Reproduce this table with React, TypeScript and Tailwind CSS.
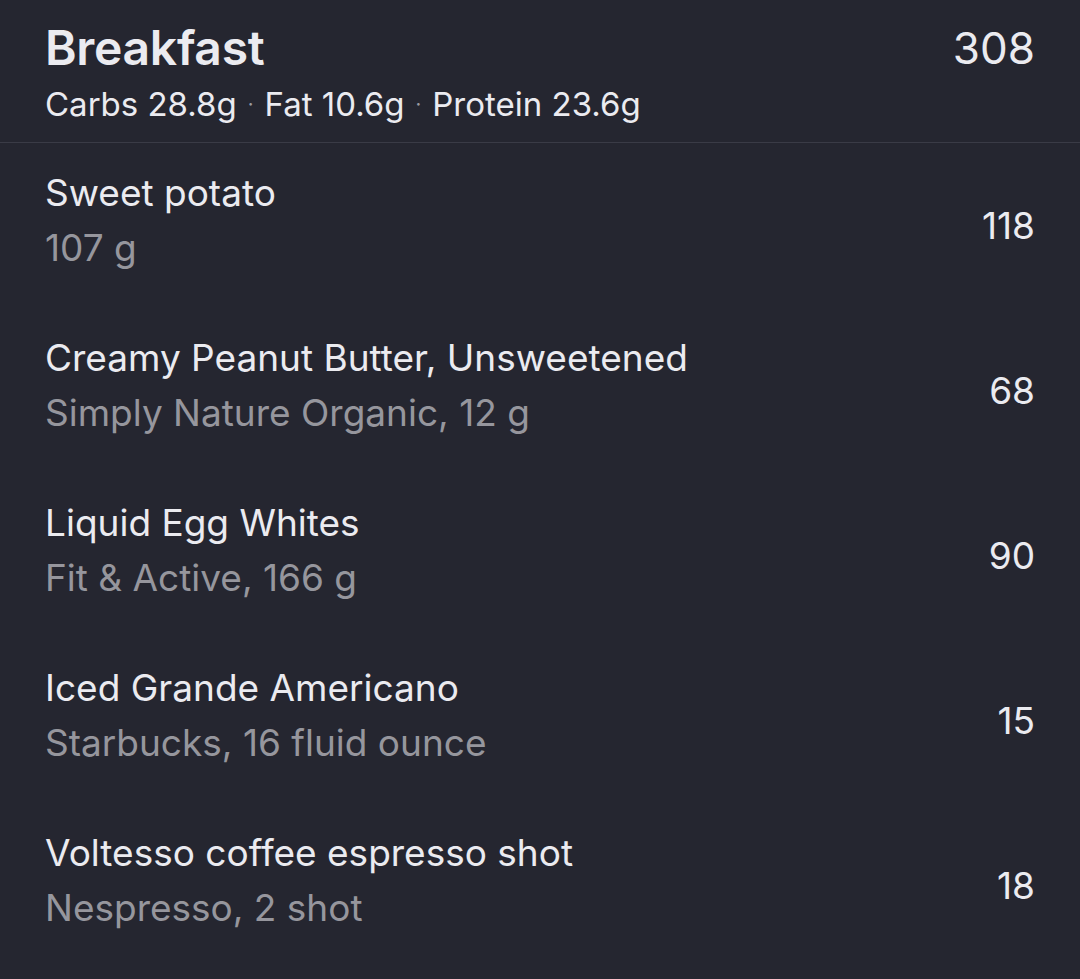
import React from "react";

const items = [
  { name: "Sweet potato", sub: "107 g", cal: 118 },
  { name: "Creamy Peanut Butter, Unsweetened", sub: "Simply Nature Organic, 12 g", cal: 68 },
  { name: "Liquid Egg Whites", sub: "Fit & Active, 166 g", cal: 90 },
  { name: "Iced Grande Americano", sub: "Starbucks, 16 fluid ounce", cal: 15 },
  { name: "Voltesso coffee espresso shot", sub: "Nespresso, 2 shot", cal: 18 },
];

export default function App() {
  return (
    <div
      className="w-[1080px] h-[979px] bg-[#252630] text-[#ebebf0] overflow-hidden"
      style={{ fontFamily: "Inter, 'Noto Sans', sans-serif" }}
    >
      <div className="flex items-start justify-between pl-[45px] pr-[45px] pt-[20px] h-[142px]">
        <div className="flex flex-col">
          <div className="text-[48px] font-semibold leading-[56px] tracking-[-0.3px]">Breakfast</div>
          <div className="text-[33px] leading-[56px] flex items-center">
            <span>Carbs 28.8g</span>
            <span className="text-[#9a9aa2] text-[20px] mx-[11px]">·</span>
            <span>Fat 10.6g</span>
            <span className="text-[#9a9aa2] text-[20px] mx-[11px]">·</span>
            <span>Protein 23.6g</span>
          </div>
        </div>
        <div className="text-[44px] leading-[56px]">308</div>
      </div>
      <div className="h-px bg-[#3a3b46]" />
      {items.map((it) => (
        <div key={it.name} className="flex items-center justify-between pl-[45px] pr-[45px] pt-[22px] pb-[33px]">
          <div className="flex flex-col">
            <div className="text-[37px] leading-[55px]">{it.name}</div>
            <div className="text-[37px] leading-[55px] text-[#96969d]">{it.sub}</div>
          </div>
          <div className="text-[37px] leading-[55px] mt-[11px]">{it.cal}</div>
        </div>
      ))}
    </div>
  );
}
